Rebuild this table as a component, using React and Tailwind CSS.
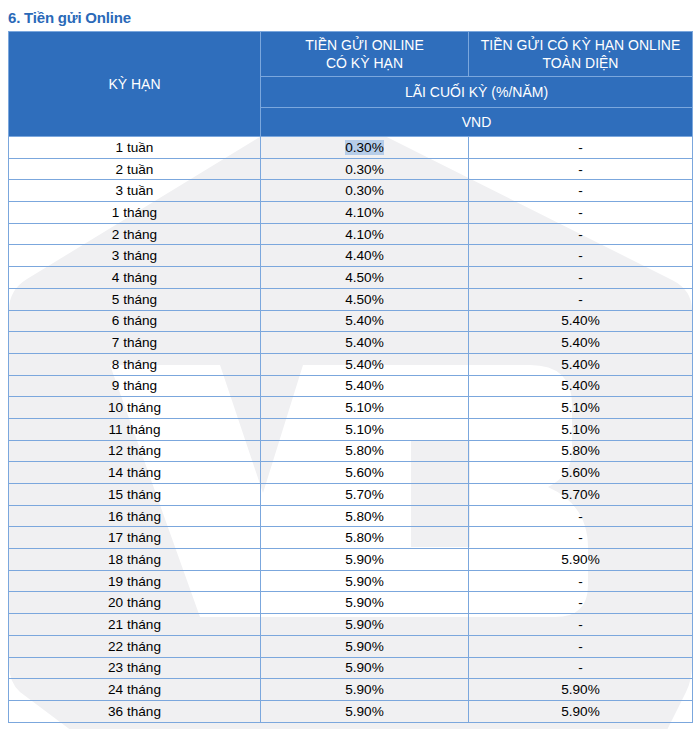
import React from 'react';

const rows = [
  ['1 tuần', '0.30%', '-'],
  ['2 tuần', '0.30%', '-'],
  ['3 tuần', '0.30%', '-'],
  ['1 tháng', '4.10%', '-'],
  ['2 tháng', '4.10%', '-'],
  ['3 tháng', '4.40%', '-'],
  ['4 tháng', '4.50%', '-'],
  ['5 tháng', '4.50%', '-'],
  ['6 tháng', '5.40%', '5.40%'],
  ['7 tháng', '5.40%', '5.40%'],
  ['8 tháng', '5.40%', '5.40%'],
  ['9 tháng', '5.40%', '5.40%'],
  ['10 tháng', '5.10%', '5.10%'],
  ['11 tháng', '5.10%', '5.10%'],
  ['12 tháng', '5.80%', '5.80%'],
  ['14 tháng', '5.60%', '5.60%'],
  ['15 tháng', '5.70%', '5.70%'],
  ['16 tháng', '5.80%', '-'],
  ['17 tháng', '5.80%', '-'],
  ['18 tháng', '5.90%', '5.90%'],
  ['19 tháng', '5.90%', '-'],
  ['20 tháng', '5.90%', '-'],
  ['21 tháng', '5.90%', '-'],
  ['22 tháng', '5.90%', '-'],
  ['23 tháng', '5.90%', '-'],
  ['24 tháng', '5.90%', '5.90%'],
  ['36 tháng', '5.90%', '5.90%'],
];

// faint bank logo sitting behind the table
const Watermark = () => (
  <svg className="absolute left-0 top-0 w-[700px] h-[729px]" viewBox="0 0 700 729">
    <path
      d="M317 102 L672 280 Q692 290 692 310 L692 665 Q692 680 686 692 L662 740 L84 740 L20 692 Q9 682 9 665 L9 310 Q9 290 27 279 Z"
      fill="#f0f0f2"
    />
    <path
      fillRule="evenodd"
      d="M110 365 L220 365 L263 493 L303 365 L530 365 Q572 365 572 405 L572 450 Q572 475 548 487 Q588 505 588 548 L588 585 Q588 617 555 617 L200 617 Z M411 440 L470 440 L470 547 L411 547 Z"
      fill="#ffffff"
    />
  </svg>
);

const th = 'border-[1.5px] border-[#7ba7dd] text-center font-normal';
const td = 'border-[1.5px] border-[#7ba7dd] text-center h-[21.7px] p-0 pt-[1px] leading-[18px]';

export default function App() {
  return (
    <div className="relative w-[700px] h-[729px] overflow-hidden bg-white font-['Liberation_Sans',Arial,sans-serif] text-black">
      <Watermark />
      <div className="relative px-2 pt-[8px]">
        <h2 className="text-[15px] leading-[19px] font-bold text-[#2a69b8] tracking-[-0.2px]">6. Tiền gửi Online</h2>
        <table className="mt-[4px] border-collapse table-fixed w-[684px] text-[13.6px]">
          <colgroup>
            <col className="w-[252px]" />
            <col className="w-[208px]" />
            <col className="w-[224px]" />
          </colgroup>
          <thead className="bg-[#2f6ebc] text-white text-[14px]">
            <tr className="h-[45px]">
              <th rowSpan={3} className={th}>KỲ HẠN</th>
              <th className={`${th} leading-[18px]`}>
                TIỀN GỬI ONLINE
                <br />
                CÓ KỲ HẠN
              </th>
              <th className={`${th} leading-[18px]`}>
                TIỀN GỬI CÓ KỲ HẠN ONLINE
                <br />
                TOÀN DIỆN
              </th>
            </tr>
            <tr className="h-[31px]">
              <th colSpan={2} className={th}>LÃI CUỐI KỲ (%/NĂM)</th>
            </tr>
            <tr className="h-[29px]">
              <th colSpan={2} className={`${th} font-bold`}>VND</th>
            </tr>
          </thead>
          <tbody>
            {rows.map((r, i) => (
              <tr key={r[0]}>
                <td className={td}>{r[0]}</td>
                <td className={td}>
                  {i === 0 ? <span className="bg-[#b6cde9]">{r[1]}</span> : r[1]}
                </td>
                <td className={td}>{r[2]}</td>
              </tr>
            ))}
          </tbody>
        </table>
      </div>
    </div>
  );
}
